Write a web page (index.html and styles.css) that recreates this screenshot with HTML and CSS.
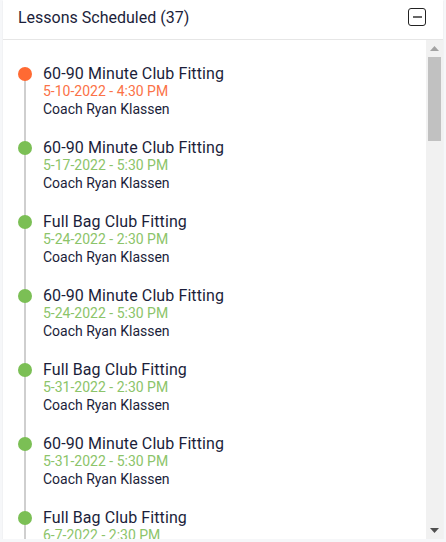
FILE: index.html
```html
<!DOCTYPE html>
<html lang="en">
<head>
<meta charset="utf-8">
<title>Lessons Scheduled</title>
<link rel="stylesheet" href="styles.css">
</head>
<body>
<div class="card">
  <div class="card-header">
    <h3 class="card-title">Lessons Scheduled (37)</h3>
    <button class="collapse-btn" aria-label="Collapse"><span class="minus"></span></button>
  </div>
  <div class="card-body">
    <div class="scroll-area">
    <ul class="timeline">
      <li class="item upcoming"><div class="t">60-90 Minute Club Fitting</div><div class="d">5-10-2022 - 4:30 PM</div><div class="c">Coach Ryan Klassen</div></li>
      <li class="item"><div class="t">60-90 Minute Club Fitting</div><div class="d">5-17-2022 - 5:30 PM</div><div class="c">Coach Ryan Klassen</div></li>
      <li class="item"><div class="t">Full Bag Club Fitting</div><div class="d">5-24-2022 - 2:30 PM</div><div class="c">Coach Ryan Klassen</div></li>
      <li class="item"><div class="t">60-90 Minute Club Fitting</div><div class="d">5-24-2022 - 5:30 PM</div><div class="c">Coach Ryan Klassen</div></li>
      <li class="item"><div class="t">Full Bag Club Fitting</div><div class="d">5-31-2022 - 2:30 PM</div><div class="c">Coach Ryan Klassen</div></li>
      <li class="item"><div class="t">60-90 Minute Club Fitting</div><div class="d">5-31-2022 - 5:30 PM</div><div class="c">Coach Ryan Klassen</div></li>
      <li class="item"><div class="t">Full Bag Club Fitting</div><div class="d">6-7-2022 - 2:30 PM</div><div class="c">Coach Ryan Klassen</div></li>
      <li class="item"><div class="t">60-90 Minute Club Fitting</div><div class="d">6-7-2022 - 5:30 PM</div><div class="c">Coach Ryan Klassen</div></li>
      <li class="item"><div class="t">Full Bag Club Fitting</div><div class="d">6-14-2022 - 2:30 PM</div><div class="c">Coach Ryan Klassen</div></li>
      <li class="item"><div class="t">60-90 Minute Club Fitting</div><div class="d">6-14-2022 - 5:30 PM</div><div class="c">Coach Ryan Klassen</div></li>
      <li class="item"><div class="t">Full Bag Club Fitting</div><div class="d">6-21-2022 - 2:30 PM</div><div class="c">Coach Ryan Klassen</div></li>
      <li class="item"><div class="t">60-90 Minute Club Fitting</div><div class="d">6-21-2022 - 5:30 PM</div><div class="c">Coach Ryan Klassen</div></li>
      <li class="item"><div class="t">Full Bag Club Fitting</div><div class="d">6-28-2022 - 2:30 PM</div><div class="c">Coach Ryan Klassen</div></li>
      <li class="item"><div class="t">60-90 Minute Club Fitting</div><div class="d">6-28-2022 - 5:30 PM</div><div class="c">Coach Ryan Klassen</div></li>
      <li class="item"><div class="t">Full Bag Club Fitting</div><div class="d">7-5-2022 - 2:30 PM</div><div class="c">Coach Ryan Klassen</div></li>
      <li class="item"><div class="t">60-90 Minute Club Fitting</div><div class="d">7-5-2022 - 5:30 PM</div><div class="c">Coach Ryan Klassen</div></li>
      <li class="item"><div class="t">Full Bag Club Fitting</div><div class="d">7-12-2022 - 2:30 PM</div><div class="c">Coach Ryan Klassen</div></li>
      <li class="item"><div class="t">60-90 Minute Club Fitting</div><div class="d">7-12-2022 - 5:30 PM</div><div class="c">Coach Ryan Klassen</div></li>
      <li class="item"><div class="t">Full Bag Club Fitting</div><div class="d">7-19-2022 - 2:30 PM</div><div class="c">Coach Ryan Klassen</div></li>
      <li class="item"><div class="t">60-90 Minute Club Fitting</div><div class="d">7-19-2022 - 5:30 PM</div><div class="c">Coach Ryan Klassen</div></li>
      <li class="item"><div class="t">Full Bag Club Fitting</div><div class="d">7-26-2022 - 2:30 PM</div><div class="c">Coach Ryan Klassen</div></li>
      <li class="item"><div class="t">60-90 Minute Club Fitting</div><div class="d">7-26-2022 - 5:30 PM</div><div class="c">Coach Ryan Klassen</div></li>
      <li class="item"><div class="t">Full Bag Club Fitting</div><div class="d">8-2-2022 - 2:30 PM</div><div class="c">Coach Ryan Klassen</div></li>
      <li class="item"><div class="t">60-90 Minute Club Fitting</div><div class="d">8-2-2022 - 5:30 PM</div><div class="c">Coach Ryan Klassen</div></li>
      <li class="item"><div class="t">Full Bag Club Fitting</div><div class="d">8-9-2022 - 2:30 PM</div><div class="c">Coach Ryan Klassen</div></li>
      <li class="item"><div class="t">60-90 Minute Club Fitting</div><div class="d">8-9-2022 - 5:30 PM</div><div class="c">Coach Ryan Klassen</div></li>
      <li class="item"><div class="t">Full Bag Club Fitting</div><div class="d">8-16-2022 - 2:30 PM</div><div class="c">Coach Ryan Klassen</div></li>
      <li class="item"><div class="t">60-90 Minute Club Fitting</div><div class="d">8-16-2022 - 5:30 PM</div><div class="c">Coach Ryan Klassen</div></li>
      <li class="item"><div class="t">Full Bag Club Fitting</div><div class="d">8-23-2022 - 2:30 PM</div><div class="c">Coach Ryan Klassen</div></li>
      <li class="item"><div class="t">60-90 Minute Club Fitting</div><div class="d">8-23-2022 - 5:30 PM</div><div class="c">Coach Ryan Klassen</div></li>
      <li class="item"><div class="t">Full Bag Club Fitting</div><div class="d">8-30-2022 - 2:30 PM</div><div class="c">Coach Ryan Klassen</div></li>
      <li class="item"><div class="t">60-90 Minute Club Fitting</div><div class="d">8-30-2022 - 5:30 PM</div><div class="c">Coach Ryan Klassen</div></li>
      <li class="item"><div class="t">Full Bag Club Fitting</div><div class="d">9-6-2022 - 2:30 PM</div><div class="c">Coach Ryan Klassen</div></li>
      <li class="item"><div class="t">60-90 Minute Club Fitting</div><div class="d">9-6-2022 - 5:30 PM</div><div class="c">Coach Ryan Klassen</div></li>
      <li class="item"><div class="t">Full Bag Club Fitting</div><div class="d">9-13-2022 - 2:30 PM</div><div class="c">Coach Ryan Klassen</div></li>
      <li class="item"><div class="t">60-90 Minute Club Fitting</div><div class="d">9-13-2022 - 5:30 PM</div><div class="c">Coach Ryan Klassen</div></li>
      <li class="item"><div class="t">Full Bag Club Fitting</div><div class="d">9-20-2022 - 2:30 PM</div><div class="c">Coach Ryan Klassen</div></li>
    </ul>
    </div>
    <div class="scrollbar" aria-hidden="true">
      <div class="sb-btn"><svg width="9" height="5" viewBox="0 0 9 5"><polygon points="0,5 9,5 4.5,0" fill="#a3a3a3"/></svg></div>
      <div class="sb-thumb"></div>
      <div class="sb-track"></div>
      <div class="sb-btn"><svg width="9" height="5" viewBox="0 0 9 5"><polygon points="0,0 9,0 4.5,5" fill="#505050"/></svg></div>
    </div>
  </div>
</div>
</body>
</html>
```
FILE: styles.css
```css
html, body {
  margin: 0;
  padding: 0;
  background: #f6f7f9;
  font-family: Roboto, "Liberation Sans", sans-serif;
}

.card {
  margin: 0 3px;
  width: 440px;
  background: #fff;
  box-shadow: 0 1px 1px rgba(0, 0, 0, 0.12);
}

.card-header {
  height: 39px;
  border-bottom: 1px solid #e6e6e6;
  display: flex;
  align-items: center;
  justify-content: space-between;
  padding: 0 17px 0 15px;
  box-sizing: content-box;
}

.card-title {
  margin: 0;
  font-size: 16px;
  font-weight: 400;
  color: #1b1e3a;
  line-height: 19px;
  padding-bottom: 5px;
}

.collapse-btn {
  width: 18px;
  height: 18px;
  padding: 0;
  margin: 0 0 6px 0;
  border: 1.5px solid #222;
  border-radius: 3px;
  background: #fff;
  display: flex;
  align-items: center;
  justify-content: center;
  box-sizing: border-box;
}

.minus {
  display: block;
  width: 9px;
  height: 2px;
  background: #666;
}

.card-body {
  height: 499px;
  display: flex;
}

.scroll-area {
  flex: 1;
  overflow: hidden;
}

.scrollbar {
  width: 17px;
  background: #f1f1f1;
  display: flex;
  flex-direction: column;
}

.sb-btn {
  height: 17px;
  display: flex;
  align-items: center;
  justify-content: center;
}

.sb-thumb {
  height: 84px;
  margin: 0 2px;
  background: #c1c1c1;
}

.sb-track {
  flex: 1;
}

.timeline {
  list-style: none;
  margin: 0;
  padding: 24px 0 10px 0;
}

.item {
  position: relative;
  padding-left: 40px;
  height: 74px;
}

.item::before {
  content: "";
  position: absolute;
  left: 15px;
  top: 3px;
  width: 14px;
  height: 14px;
  border-radius: 50%;
  background: #7bbf55;
  z-index: 1;
}

.item::after {
  content: "";
  position: absolute;
  left: 21px;
  top: 10px;
  width: 2px;
  height: 74px;
  background: #cfcfcf;
}

.item:last-child::after {
  display: none;
}

.t {
  font-size: 16px;
  line-height: 19px;
  color: #1b1e3a;
  letter-spacing: 0.1px;
}

.d {
  font-size: 14px;
  line-height: 17px;
  color: #8cc46a;
}

.c {
  font-size: 14px;
  line-height: 19px;
  color: #1b1e3a;
}

.upcoming::before {
  background: #ff6a33;
}

.upcoming .d {
  color: #fb7247;
}
```
